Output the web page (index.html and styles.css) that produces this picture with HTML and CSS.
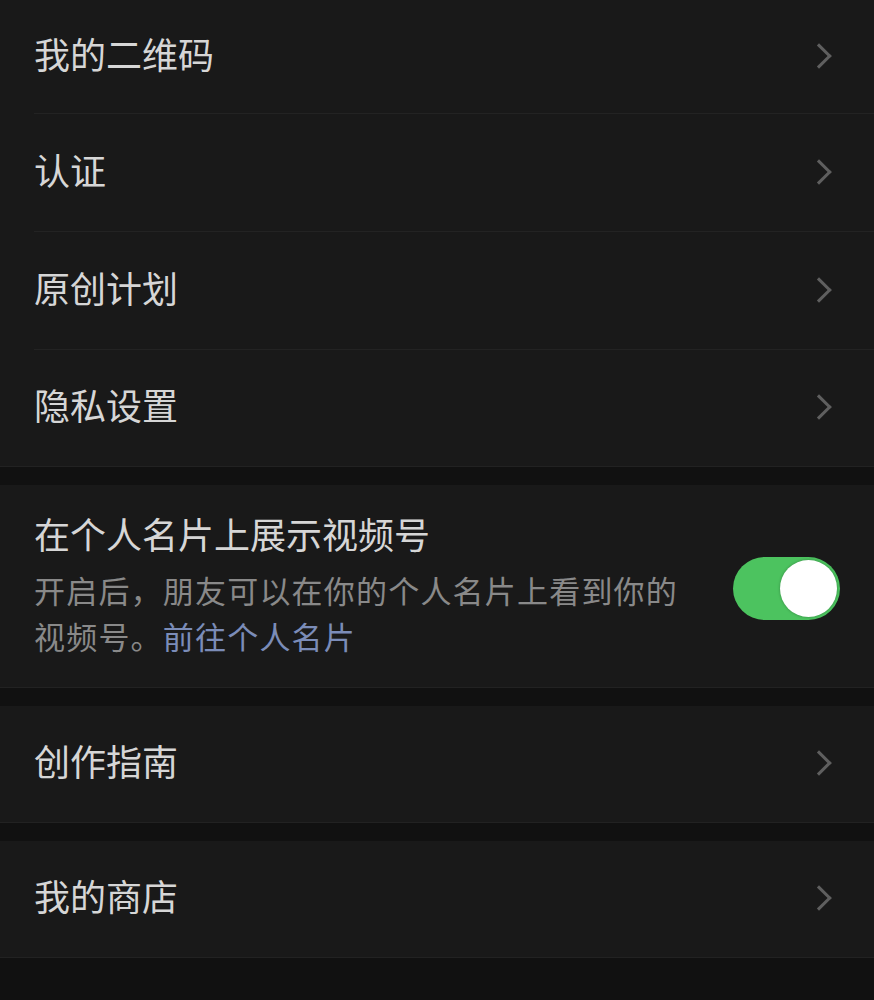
FILE: index.html
```html
<!DOCTYPE html>
<html lang="zh">
<head>
    <meta charset="UTF-8">
    <meta name="viewport" content="width=device-width, initial-scale=1.0">
    <title>设置</title>
    <link rel="stylesheet" href="styles.css">
</head>
<body>
    <div class="group">
        <div class="row first"><span class="label">我的二维码</span><span class="arrow"></span></div>
        <div class="row"><span class="label">认证</span><span class="arrow"></span></div>
        <div class="row"><span class="label">原创计划</span><span class="arrow"></span></div>
        <div class="row last"><span class="label">隐私设置</span><span class="arrow"></span></div>
    </div>

    <div class="group switch-group">
        <div class="switch-text">
            <div class="label">在个人名片上展示视频号</div>
            <div class="desc">开启后，朋友可以在你的个人名片上看到你的视频号。<span class="link">前往个人名片</span></div>
        </div>
        <div class="toggle on"><span class="knob"></span></div>
    </div>

    <div class="group">
        <div class="row single"><span class="label">创作指南</span><span class="arrow"></span></div>
    </div>

    <div class="group">
        <div class="row single"><span class="label">我的商店</span><span class="arrow"></span></div>
    </div>
</body>
</html>
```

FILE: styles.css
```css
body {
    margin: 0;
    background-color: #111111;
    font-family: "Noto Sans CJK SC", "Noto Sans", sans-serif;
    color: #d6d6d6;
}

.group {
    background-color: #191919;
    margin-bottom: 18px;
    border-bottom: 1px solid #222;
}

.row {
    display: flex;
    align-items: center;
    justify-content: space-between;
    height: 118px;
    margin-left: 34px;
    padding-right: 40px;
    padding-bottom: 8px;
    border-bottom: 1px solid #232323;
    box-sizing: border-box;
}

.row.first {
    height: 114px;
}

.row.last,
.row.single {
    border-bottom: none;
}

.row.last {
    height: 116px;
}

.row.single {
    height: 116px;
}

.label {
    font-size: 36px;
    line-height: 1;
}

/* flecha gris a la derecha */
.arrow {
    width: 15px;
    height: 15px;
    border-top: 3px solid #5f5f5f;
    border-right: 3px solid #5f5f5f;
    transform: rotate(45deg);
    margin-right: 6px;
    margin-top: 6px;
}

.switch-group {
    display: flex;
    align-items: center;
    justify-content: space-between;
    height: 203px;
    padding: 0 34px 0 34px;
    box-sizing: border-box;
}

.switch-text .label {
    margin-top: 2px;
}

.desc {
    margin-top: 16px;
    width: 670px;
    font-size: 31px;
    line-height: 46px;
    color: #898989;
    letter-spacing: 1.2px;
}

.link {
    color: #7b8cb8;
}

.toggle {
    position: relative;
    width: 107px;
    height: 63px;
    border-radius: 32px;
    background-color: #4cc35f;
    margin-top: 4px;
}

.toggle .knob {
    position: absolute;
    top: 3px;
    right: 3px;
    width: 57px;
    height: 57px;
    border-radius: 50%;
    background-color: #ffffff;
    box-shadow: 0 0 3px rgba(0, 0, 0, 0.3);
}
```
